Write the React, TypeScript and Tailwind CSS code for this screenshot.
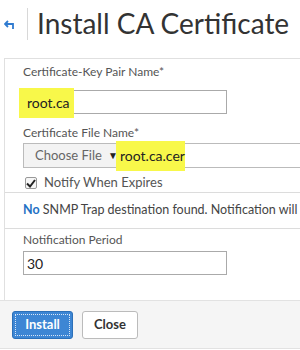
import React from "react";

export default function App() {
  return (
    <div className="w-[300px] h-[350px] bg-white overflow-hidden relative" style={{ fontFamily: 'Lato, "Open Sans", sans-serif' }}>
      {/* header */}
      <div className="flex items-start h-[58px]">
        <div className="w-[27px] shrink-0 mt-[20px] flex justify-center pr-[6px]">
          <svg width="14" height="10" viewBox="0 0 14 10">
            <path d="M4 1 L1 4 L4 7" fill="none" stroke="#2f7bd0" strokeWidth="1.8" />
            <path d="M1 4 H9 V9" fill="none" stroke="#2f7bd0" strokeWidth="1.8" />
          </svg>
        </div>
        <div className="w-px shrink-0 h-[32px] mt-[8px] bg-[#d8d8d8]" />
        <div className="ml-[9px] mt-[8px] text-[28px] leading-[30px] text-[#333] whitespace-nowrap">Install CA Certificate</div>
      </div>
      {/* panel */}
      <div className="ml-[4px] border-l border-t border-[#e0e0e0] h-[242px]">
        <div className="pl-[18px] pt-[5px]">
          <div className="text-[12px] text-[#555] leading-[16px] whitespace-nowrap">Certificate-Key Pair Name*</div>
          <div className="relative mt-[10px] w-[204px] h-[24px] border border-[#aaa] flex items-center">
            <div className="absolute left-[-5px] top-[-3px] w-[55px] h-[30px] bg-[#f8f84a]" />
            <span className="relative pl-[3px] text-[14px] text-[#222]">root.ca</span>
          </div>
          <div className="text-[12px] text-[#555] leading-[16px] mt-[11px] whitespace-nowrap">Certificate File Name*</div>
          <div className="mt-[2px] h-[25px] border border-[#bbb] flex items-center w-[300px]">
            <div className="h-full w-[92px] shrink-0 bg-[#f3f3f3] flex items-center pl-[11px] text-[13px] text-[#666] whitespace-nowrap">
              Choose File
              <span className="ml-[6px] text-[10px] text-[#222]">▼</span>
            </div>
            <div className="h-[30px] shrink-0 bg-[#f8f84a] w-[69px] flex items-center pl-[4px] text-[14px] text-[#222] whitespace-nowrap">root.ca.cer</div>
          </div>
          <div className="flex items-center mt-[8px] h-[14px]">
            <div className="w-[12px] h-[12px] border border-[#999] rounded-[2px] bg-[#f6f6f6] flex items-center justify-center ml-[2px]">
              <svg width="10" height="9" viewBox="0 0 10 9"><path d="M1 4.5 L4 7.5 L9 1" fill="none" stroke="#222" strokeWidth="2" /></svg>
            </div>
            <span className="ml-[7px] text-[13px] text-[#555]">Notify When Expires</span>
          </div>
        </div>
        <div className="mt-[2px] border-t border-b border-[#dcdcdc] h-[37px] flex items-center pl-[18px] text-[12.5px] text-[#444] whitespace-nowrap overflow-hidden">
          <span className="font-bold text-[#1f72c4]">No</span>&nbsp;SNMP Trap destination found. Notification will not
        </div>
        <div className="pl-[18px] pt-[3px]">
          <div className="text-[12px] text-[#555] leading-[16px] whitespace-nowrap">Notification Period</div>
          <div className="mt-[3px] w-[204px] h-[24px] border border-[#aaa] flex items-center pl-[3px] text-[14px] text-[#222]">30</div>
        </div>
      </div>
      {/* footer */}
      <div className="border-t border-b border-[#e2e2e2] bg-[#f5f5f5] h-[49px] flex items-center pl-[12px] gap-[9px]">
        <button className="w-[61px] h-[28px] rounded-[3px] bg-[#3d86d4] text-white font-bold text-[13px] border border-[#2c70b8] flex items-center justify-center">
          <span className="border border-dotted border-white/80 w-[55px] h-[22px] flex items-center justify-center">Install</span>
        </button>
        <button className="w-[56px] h-[28px] rounded-[3px] bg-white text-[#333] font-bold text-[13px] border border-[#bbb]">Close</button>
      </div>
    </div>
  );
}
